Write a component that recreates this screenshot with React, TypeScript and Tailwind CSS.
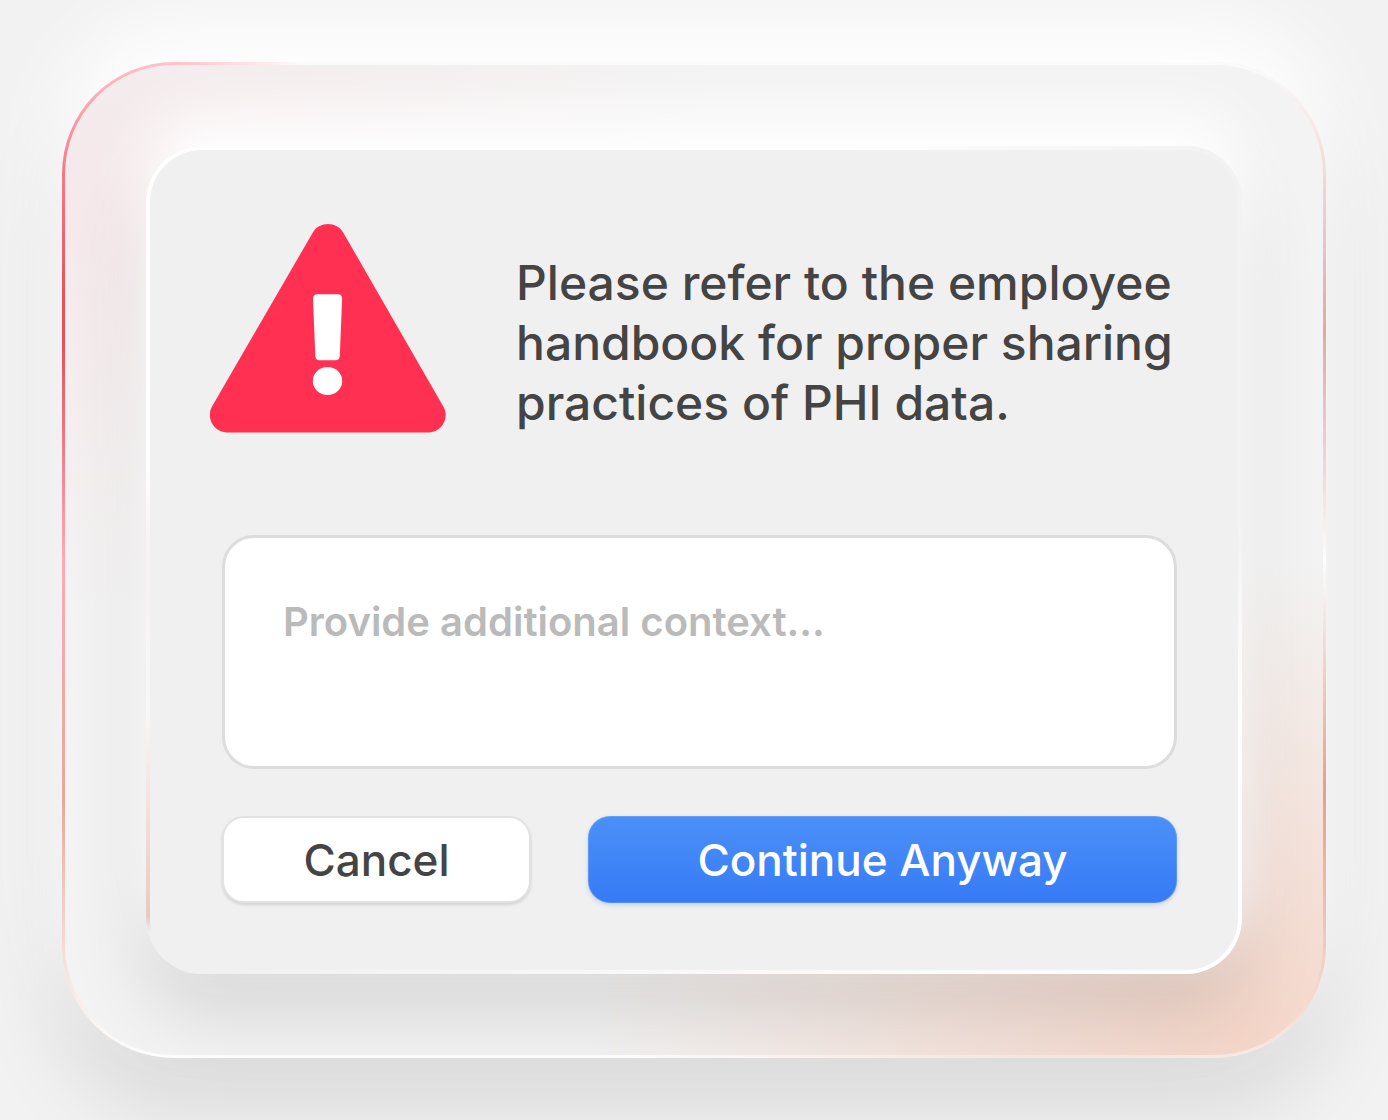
import React from 'react'

function WarningIcon() {
  return (
    <svg viewBox="0 0 236 209" className="w-[236px] shrink-0" role="img" aria-label="Warning">
      <path
        fill="#ff3052"
        d="M103 8.200C109.500 -2.700 126.500 -2.700 133 8.200L233.300 182.400C240 193.600 231.800 208.400 218.500 208.400H17C4 208.400 -4.500 193.600 2 182.400Z"
      />
      <path
        fill="#fff"
        d="M107.500 70.200H127.800Q132.300 70.200 132.100 74.700L129.800 132Q129.600 136.200 125.300 136.200H109.700Q105.500 136.200 105.300 132L103 74.700Q102.900 70.200 107.500 70.200Z"
      />
      <ellipse cx="117.500" cy="157" rx="14.700" ry="14" fill="#fff" />
    </svg>
  )
}

export default function App() {
  const [context, setContext] = React.useState<string>('')

  return (
    <main className="min-h-screen bg-[#f2f2f2] p-[62px] font-['Inter',sans-serif] font-medium text-[#444444]">
      {/* outer glass frame, the padding shows the rim gradient */}
      <div className="rounded-[112px] p-[3px] shadow-[0_-40px_80px_#ffffff,0_48px_90px_rgba(0,0,0,0.11)] [background:linear-gradient(to_right,transparent_112px,#fbfbfb_240px)_top/100%_3px_no-repeat,linear-gradient(to_right,#ffffff_45%,#f7ebe6_75%)_bottom/100%_3px_no-repeat,linear-gradient(#ffc0cb,#f57a86_11%,#e5505a_24%,#e5505a_28%,#ffa8b8_50%,#e8a898_74%,#f5dcd4_89%,#ffffff)_left/50%_100%_no-repeat,linear-gradient(#fbfbfb,#f5e8e5_7%,#e0a9a0_27%,#f2dcd6_42%,#fdfdfd_50%,#e3a08c_73%,#efccc0_89%,#f8ebe6)_right/50%_100%_no-repeat]">
        <div className="rounded-[109px] bg-[#f3f3f3] bg-[radial-gradient(ellipse_50%_42%_at_4%_14%,#f5e8ea,transparent),radial-gradient(ellipse_52%_48%_at_94%_98%,#f5d6c9,transparent)] p-[81px]">
          <div className="rounded-[56px] p-[4px] shadow-[0_-32px_60px_#ffffff,0_40px_80px_rgba(0,0,0,0.12)] [background:linear-gradient(to_right,#ffffff_60%,#f2f2f2)_top/100%_4px_no-repeat,linear-gradient(to_right,#f0f0f0,#ffffff_90%)_bottom/100%_4px_no-repeat,linear-gradient(#ffffff_38%,#f7f0f0_50%,#f8f8f8_68%,#f5e4de_78%,#e9c9be_93%,#f0f0f0_95%)_left/50%_100%_no-repeat,linear-gradient(#f2f2f2_45%,#ffffff_70%)_right/50%_100%_no-repeat]">
            <section className="rounded-[52px] bg-[#f0f0f0] pt-[74px] pr-[61px] pb-[67px] pl-[60px]">
              <div className="flex items-end gap-[70px]">
                <WarningIcon />
                <p className="text-[48px] leading-[60px]">
                  Please refer to the employee
                  <br />
                  handbook for proper sharing
                  <br />
                  practices of PHI data.
                </p>
              </div>
              <form className="mt-[102px] ml-3" onSubmit={e => e.preventDefault()}>
                <textarea
                  aria-label="Additional context"
                  placeholder="Provide additional context..."
                  value={context}
                  onChange={e => setContext(e.target.value)}
                  className="block h-[234px] w-full resize-none rounded-[32px] border-[3px] border-[#dcdcdc] bg-white px-[58px] py-[54px] text-[40px] leading-[60px] font-semibold placeholder:text-[#bababa] focus:outline-none"
                />
                <div className="mt-[47px] grid grid-cols-[309fr_589fr] gap-[57px]">
                  <button
                    type="button"
                    className="h-[87px] rounded-[22px] border-2 border-[#e2e2e2] bg-white text-[44px] shadow-[0_2px_3px_rgba(0,0,0,0.12)]"
                  >
                    Cancel
                  </button>
                  <button
                    type="submit"
                    className="h-[87px] rounded-[22px] bg-linear-to-b from-[#4b90f7] to-[#377af6] text-[44px] text-white shadow-[0_2px_4px_rgba(55,122,246,0.25),inset_0_0_0_1px_rgba(255,255,255,0.15)]"
                  >
                    Continue Anyway
                  </button>
                </div>
              </form>
            </section>
          </div>
        </div>
      </div>
    </main>
  )
}
